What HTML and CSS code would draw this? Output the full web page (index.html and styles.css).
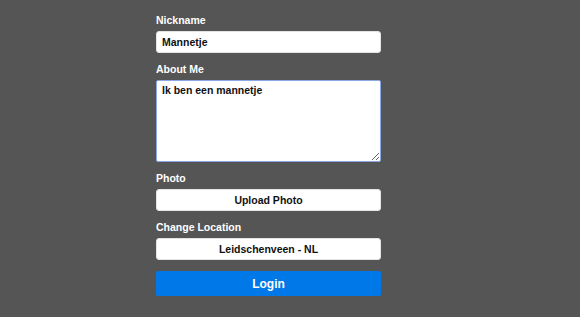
FILE: index.html
```html
<!DOCTYPE html>
<html lang="en">
<head>
    <meta charset="UTF-8">
    <meta name="viewport" content="width=device-width, initial-scale=1.0">
    <title>Profile</title>
    <link rel="stylesheet" href="styles.css">
</head>
<body>

    <!-- Profile form -->
    <form class="profile-form">
        <div class="field-group">
            <label for="nickname">Nickname</label>
            <input type="text" id="nickname" class="text-input" value="Mannetje">
        </div>

        <div class="field-group">
            <label for="about">About Me</label>
            <textarea id="about" class="text-area">Ik ben een mannetje</textarea>
        </div>

        <div class="field-group">
            <label>Photo</label>
            <button type="button" class="plain-button">Upload Photo</button>
        </div>

        <div class="field-group">
            <label>Change Location</label>
            <button type="button" class="plain-button">Leidschenveen - NL</button>
        </div>

        <button type="submit" class="login-button">Login</button>
    </form>

</body>
</html>
```

FILE: styles.css
```css
/* Basic Reset */
body {
    font-family: "Liberation Sans", Arial, sans-serif;
    margin: 0;
    padding: 0;
    background-color: #555555;
    min-height: 100vh;
}

/* Form column */
.profile-form {
    width: 225px;
    margin-left: 156px;
    padding-top: 15px;
}

.field-group {
    margin-bottom: 11px;
}

.field-group label {
    display: block;
    color: #ffffff;
    font-size: 10.5px;
    font-weight: bold;
    line-height: 11px;
    margin-bottom: 5px;
}

.text-input,
.text-area,
.plain-button {
    display: block;
    width: 100%;
    box-sizing: border-box;
    font-family: "Liberation Sans", Arial, sans-serif;
    font-size: 10.5px;
    font-weight: bold;
    color: #111111;
    background-color: #ffffff;
    border: 1px solid #e4e4e4;
    border-radius: 3px;
    margin: 0;
}

.text-input {
    height: 22px;
    padding: 0 5px;
    outline: none;
}

.text-area {
    height: 82px;
    padding: 3px 5px;
    line-height: 12px;
    border-color: #8aa9e4; /* focused look */
    border-radius: 2px;
    outline: none;
}

.plain-button {
    height: 22px;
    padding: 0;
    text-align: center;
    cursor: pointer;
}

/* Login button */
.login-button {
    display: block;
    width: 100%;
    height: 25px;
    margin: 0;
    padding: 0;
    border: none;
    border-radius: 2px;
    background-color: #0078e7;
    color: #ffffff;
    font-family: "Liberation Sans", Arial, sans-serif;
    font-size: 12px;
    font-weight: bold;
    cursor: pointer;
}
```
